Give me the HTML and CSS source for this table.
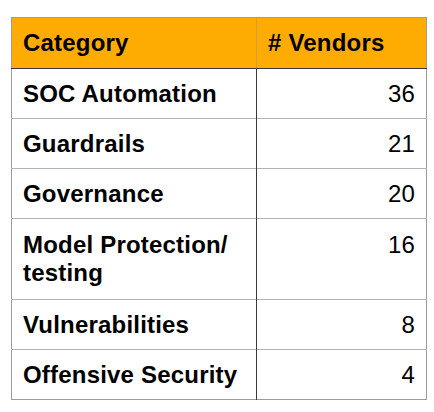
FILE: index.html
```html
<!DOCTYPE html>
<html>
<head>
<meta charset="utf-8">
<link rel="stylesheet" href="styles.css">
</head>
<body>
<table class="vendors">
  <thead>
    <tr><th class="cat">Category</th><th class="num-h"># Vendors</th></tr>
  </thead>
  <tbody>
    <tr><td class="cat">SOC Automation</td><td class="num">36</td></tr>
    <tr><td class="cat">Guardrails</td><td class="num">21</td></tr>
    <tr><td class="cat">Governance</td><td class="num">20</td></tr>
    <tr><td class="cat">Model Protection/<br>testing</td><td class="num">16</td></tr>
    <tr><td class="cat">Vulnerabilities</td><td class="num">8</td></tr>
    <tr><td class="cat">Offensive Security</td><td class="num">4</td></tr>
  </tbody>
</table>
</body>
</html>
```
FILE: styles.css
```css
html, body {
  margin: 0;
  background: #ffffff;
}
body {
  padding: 17px 0 0 11px;
  font-family: "Liberation Sans", Arial, Helvetica, sans-serif;
  color: #000;
}
.vendors {
  border-collapse: collapse;
  width: 416px;
  table-layout: fixed;
  font-size: 24px;
  letter-spacing: 0.2px;
  line-height: 28px;
  border: 1.5px solid #9c9c9c;
}
.vendors th, .vendors td {
  padding: 11px 11px 10px 11px;
  vertical-align: top;
  text-align: left;
}
.vendors th {
  background: #ffac02;
  font-weight: bold;
  height: 29px;
  border-bottom: 1px solid #3a3a3a;
}
.vendors th.cat {
  width: 222px;
  border-right: 1px solid #d89a3a;
}
.vendors td {
  border-top: 1px solid #b4b4b4;
  height: 28px;
}
.vendors td.cat {
  font-weight: bold;
  border-right: 1px solid #3a3a3a;
}
.vendors td.num {
  text-align: right;
  font-weight: normal;
}
.vendors tbody tr:first-child td {
  border-top: 1px solid #3a3a3a;
}
.vendors tbody tr:nth-child(4) td {
  padding-top: 12px;
  padding-bottom: 12px;
}
```
